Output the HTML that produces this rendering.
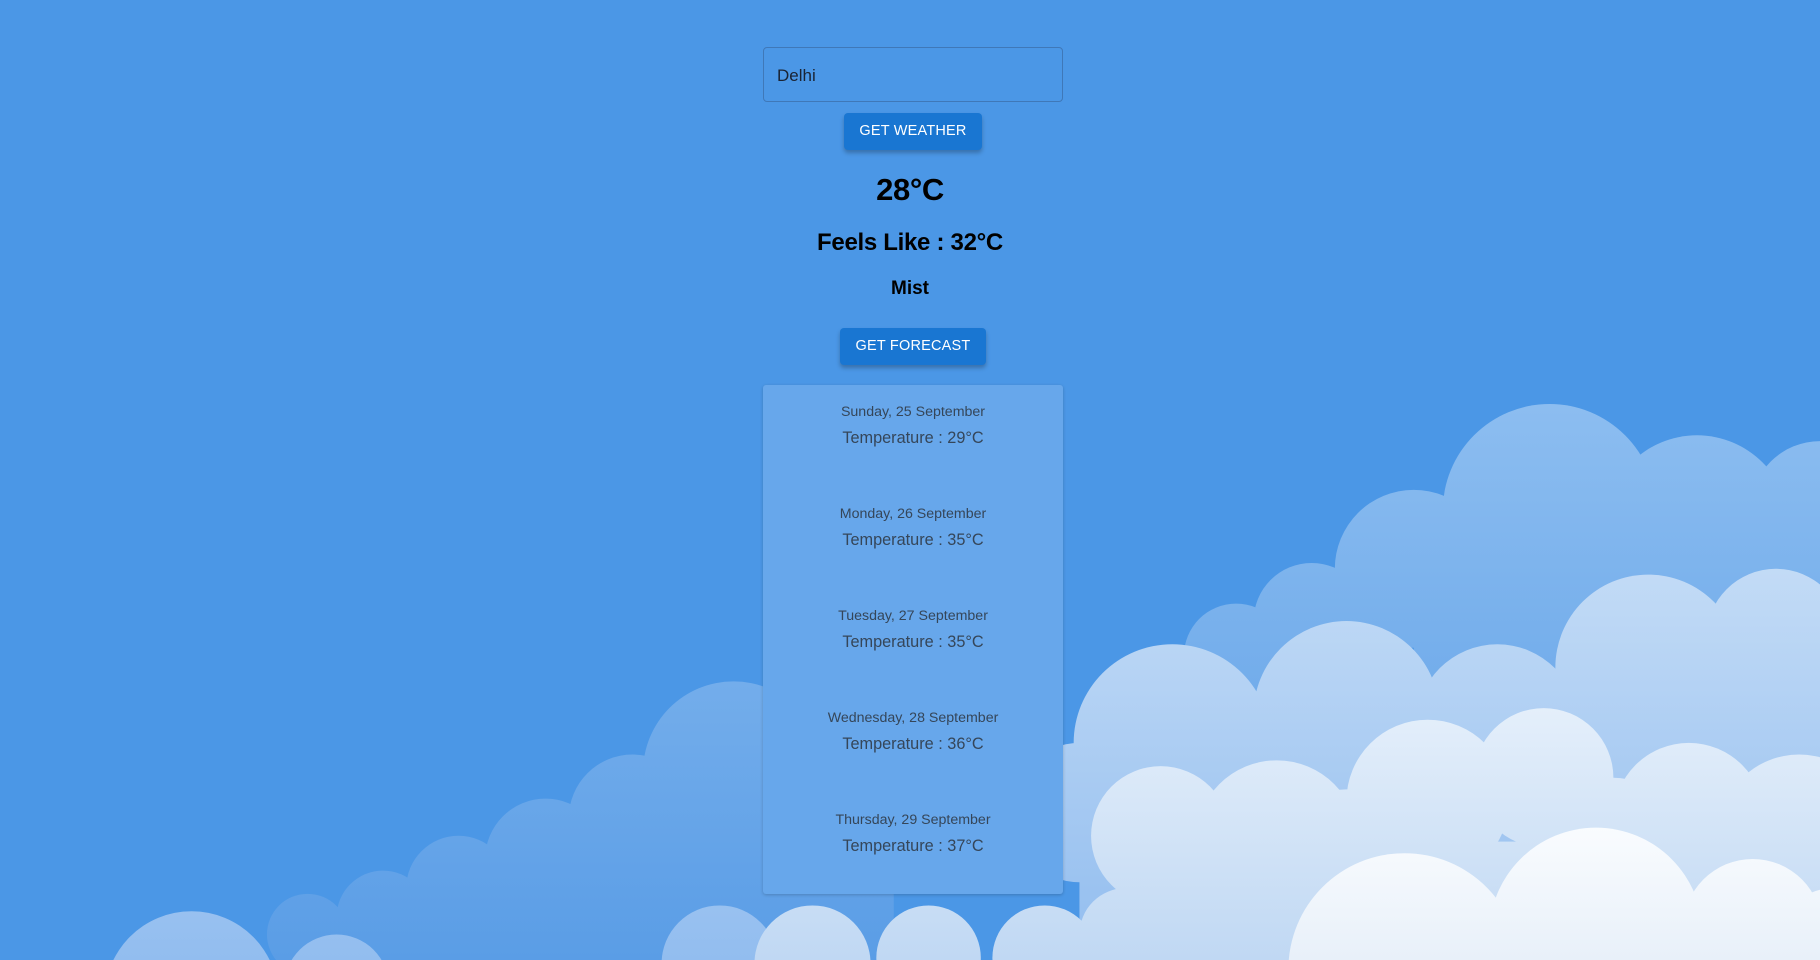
<!DOCTYPE html>
<html><head><meta charset="utf-8"><style>
html,body{margin:0;padding:0;width:1820px;height:960px;overflow:hidden;background:#4b97e6;font-family:"Liberation Sans",sans-serif;}
svg.bg{position:absolute;left:0;top:0;width:1820px;height:960px;overflow:hidden;}
.abs{position:absolute;}
.input{left:763px;top:47px;width:298px;height:53px;border:1px solid #3f78b8;border-radius:4px;}
.input span{position:absolute;left:13px;top:18px;font-size:17px;color:#1a2333;}
.btn{background:#1976d2;color:#fff;font-size:14.5px;letter-spacing:.2px;border-radius:4px;box-shadow:0 3px 4px rgba(0,0,0,.25);text-align:center;}
.big{position:absolute;left:0;width:1820px;text-align:center;font-family:"Liberation Sans",sans-serif;font-weight:bold;color:#000;}
.card{left:763px;top:385px;width:300px;height:509px;background:#67a7eb;border-radius:3px;box-shadow:0 1px 3px rgba(0,0,0,.2);}
.d{position:absolute;left:0;width:300px;text-align:center;font-size:14.2px;color:#354659;}
.t{position:absolute;left:0;width:300px;text-align:center;font-size:16.3px;color:#354659;}
</style></head><body>
<svg class="bg" viewBox="0 0 1568 827" preserveAspectRatio="none">
<defs>
<linearGradient id="g1" gradientUnits="userSpaceOnUse" x1="0" y1="350" x2="0" y2="827"><stop offset="0" stop-color="#8cbdf0"/><stop offset="1" stop-color="#5a9de6"/></linearGradient>
<linearGradient id="g2" gradientUnits="userSpaceOnUse" x1="0" y1="480" x2="0" y2="827"><stop offset="0" stop-color="#c4dcf6"/><stop offset="1" stop-color="#92bdef"/></linearGradient>
<linearGradient id="g3" gradientUnits="userSpaceOnUse" x1="0" y1="600" x2="0" y2="827"><stop offset="0" stop-color="#e6f0fb"/><stop offset="1" stop-color="#c0d8f3"/></linearGradient>
<linearGradient id="g4" gradientUnits="userSpaceOnUse" x1="0" y1="700" x2="0" y2="827"><stop offset="0" stop-color="#fbfdff"/><stop offset="1" stop-color="#e8f0f9"/></linearGradient>
</defs>
<g fill="url(#g1)">
<circle cx="1335" cy="440" r="92"/><circle cx="1462" cy="455" r="80"/><circle cx="1568" cy="440" r="60"/><circle cx="1400" cy="480" r="80"/>
<circle cx="1218" cy="490" r="68"/><circle cx="1130" cy="535" r="50"/><circle cx="1065" cy="565" r="45"/><circle cx="1005" cy="595" r="38"/>
<rect x="1000" y="560" width="568" height="267"/><rect x="1218" y="480" width="350" height="100"/>
<circle cx="632" cy="665" r="78"/><circle cx="545" cy="705" r="55"/><circle cx="470" cy="740" r="52"/><circle cx="395" cy="765" r="45"/>
<circle cx="330" cy="790" r="40"/><circle cx="265" cy="805" r="35"/><rect x="300" y="770" width="465" height="57"/><rect x="470" y="700" width="300" height="127"/>
</g>
<g fill="url(#g2)">
<circle cx="1010" cy="640" r="85"/><circle cx="1160" cy="615" r="80"/><circle cx="1290" cy="625" r="70"/><circle cx="1420" cy="575" r="80"/>
<circle cx="1530" cy="550" r="60"/><circle cx="1575" cy="570" r="40"/><circle cx="930" cy="700" r="60"/>
<rect x="930" y="640" width="638" height="187"/><rect x="1420" y="570" width="148" height="80"/>
<circle cx="165" cy="860" r="75"/><circle cx="290" cy="850" r="45"/><circle cx="620" cy="830" r="50"/>
</g>
<g fill="url(#g3)">
<circle cx="1000" cy="720" r="60"/><circle cx="1100" cy="725" r="70"/><circle cx="1230" cy="690" r="70"/><circle cx="1330" cy="670" r="60"/>
<circle cx="1455" cy="705" r="65"/><circle cx="1550" cy="720" r="70"/><circle cx="1160" cy="740" r="60"/><circle cx="1390" cy="730" r="60"/>
<rect x="1000" y="725" width="568" height="102"/>
<circle cx="700" cy="830" r="50"/><circle cx="800" cy="825" r="45"/><circle cx="900" cy="825" r="45"/><circle cx="970" cy="805" r="40"/>
</g>
<g fill="url(#g4)">
<circle cx="1210" cy="835" r="100"/><circle cx="1375" cy="805" r="92"/><circle cx="1510" cy="800" r="60"/><circle cx="1580" cy="815" r="50"/>
<rect x="1210" y="805" width="358" height="22"/>
</g>
</svg>

<div class="abs input"><span>Delhi</span></div>
<div class="abs btn" style="left:844px;top:113px;width:138px;height:37px;line-height:37px;">GET WEATHER</div>
<div class="big" style="top:172px;font-size:31px;letter-spacing:-0.4px;">28°C</div>
<div class="big" style="top:229px;font-size:24px;letter-spacing:-0.3px;">Feels Like : 32°C</div>
<div class="big" style="top:278px;font-size:19px;letter-spacing:0px;">Mist</div>
<div class="abs btn" style="left:840px;top:328px;width:146px;height:37px;line-height:37px;">GET FORECAST</div>

<div class="abs card">
<div class="d" style="top:19px">Sunday, 25 September</div><div class="t" style="top:44px">Temperature : 29°C</div>
<div class="d" style="top:121px">Monday, 26 September</div><div class="t" style="top:146px">Temperature : 35°C</div>
<div class="d" style="top:223px">Tuesday, 27 September</div><div class="t" style="top:248px">Temperature : 35°C</div>
<div class="d" style="top:325px">Wednesday, 28 September</div><div class="t" style="top:350px">Temperature : 36°C</div>
<div class="d" style="top:427px">Thursday, 29 September</div><div class="t" style="top:452px">Temperature : 37°C</div>
</div>
</body></html>
